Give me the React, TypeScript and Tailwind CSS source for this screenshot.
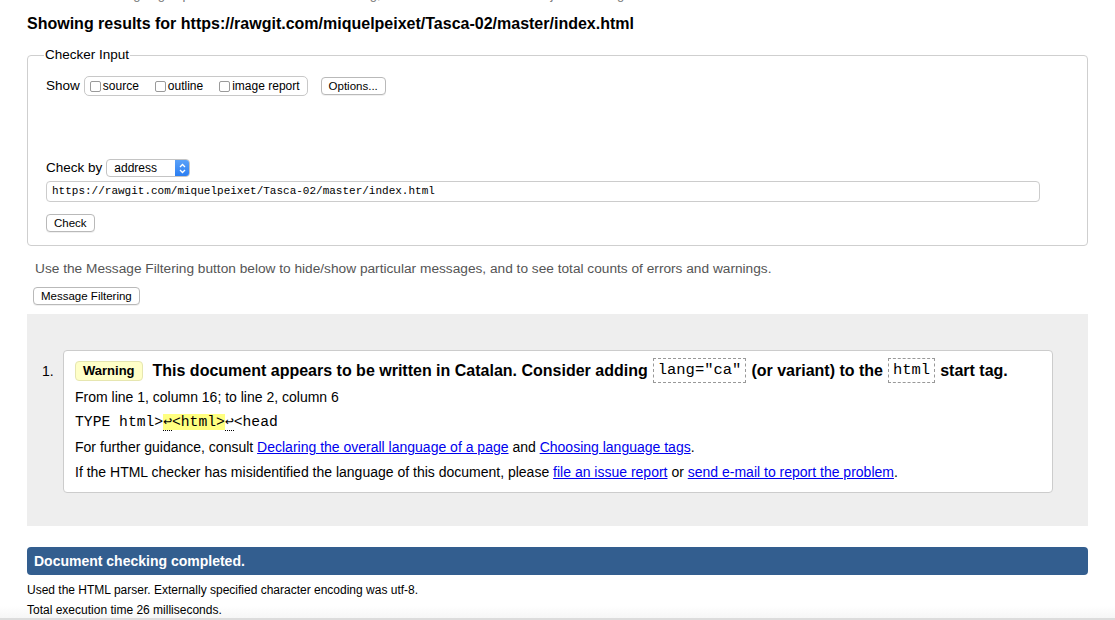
import React from "react";

function Checkbox({ label }: { label: string }) {
  return (
    <label className="flex items-center gap-[2px] text-[12px] leading-[14px]">
      <span className="inline-block w-[11px] h-[11px] rounded-[2px] border border-[#9a9a9a] bg-white" />
      <span>{label}</span>
    </label>
  );
}

function MacButton({ children, className = "" }: { children: React.ReactNode; className?: string }) {
  return (
    <button
      className={
        "h-[18px] px-[7px] rounded-[4px] border border-[#b9b9b9] bg-white text-[11.5px] leading-[16px] text-black shadow-[0_1px_0_rgba(0,0,0,0.06)] " +
        className
      }
    >
      {children}
    </button>
  );
}

function Ret() {
  return <span className="border-b border-dotted border-black">↩</span>;
}

export default function App() {
  return (
    <div className="relative w-full h-[620px] overflow-hidden bg-white text-black font-['Liberation_Sans',Arial,sans-serif]">
      {/* browser edge fade at the bottom */}
      <div className="absolute bottom-0 left-0 right-0 h-[14px] bg-gradient-to-b from-transparent to-[#f6f6f6] border-b-[2px] border-[#dcdcdc]" />

      <div className="relative px-[27px]">
        {/* line cut off at the top */}
        <div className="-mt-[13px] pl-[8px] text-[13px] leading-[16px] text-[#777] whitespace-nowrap">
          This tool is an ongoing experiment in better HTML checking, and its behavior remains subject to change
        </div>

        <h2 className="mt-[11px] text-[16px] leading-[20px] font-bold">
          Showing results for https://rawgit.com/miquelpeixet/Tasca-02/master/index.html
        </h2>

        {/* Checker Input */}
        <fieldset className="mt-[13px] border border-[#cfcfcf] rounded-[4px] pl-[18px] pr-[47px] pb-[13px]">
          <legend className="-ml-[2px] px-[1px] text-[13.5px] leading-[16px]">Checker Input</legend>

          <div className="mt-[13px] flex items-center h-[20px]">
            <span className="text-[13.5px] mr-[4px]">Show</span>
            <div className="flex items-center h-[20px] pl-[5px] pr-[7px] gap-[16px] rounded-[5px] border border-[#c8c8c8]">
              <Checkbox label="source" />
              <Checkbox label="outline" />
              <Checkbox label="image report" />
            </div>
            <MacButton className="ml-[13px]">Options...</MacButton>
          </div>

          <div className="mt-[63px] flex items-center h-[18px]">
            <span className="text-[13.5px] mr-[4px]">Check by</span>
            <div className="flex h-[18px] w-[84px] rounded-[4px] border border-[#c4c4c4] overflow-hidden">
              <span className="flex-1 pl-[7px] text-[12px] leading-[16px]">address</span>
              <span className="w-[14px] bg-gradient-to-b from-[#5aa1f8] to-[#2a7ef2] flex items-center justify-center">
                <svg width="7" height="11" viewBox="0 0 7 11" fill="none" stroke="white" strokeWidth="1.3">
                  <path d="M1 4 L3.5 1.5 L6 4" />
                  <path d="M1 7 L3.5 9.5 L6 7" />
                </svg>
              </span>
            </div>
          </div>

          <div className="mt-[4px] h-[21px] rounded-[4px] border border-[#cccccc] flex items-center pl-[5px] font-['Liberation_Mono',monospace] text-[11px]">
            https://rawgit.com/miquelpeixet/Tasca-02/master/index.html
          </div>

          <MacButton className="mt-[12px] block">Check</MacButton>
        </fieldset>

        <p className="mt-[15px] pl-[8px] text-[13.7px] leading-[16px] text-[#555]">
          Use the Message Filtering button below to hide/show particular messages, and to see total counts of errors and warnings.
        </p>

        <div className="mt-[6px] pl-[6px]">
          <MacButton className="shadow-[0_0_0_3px_#b3d3fa]">Message Filtering</MacButton>
        </div>

        {/* messages */}
        <div className="mt-[7px] bg-[#eeeeee] pt-[36px] pb-[33px] pl-[15px] pr-[35px] flex">
          <div className="w-[21px] pt-[9px] text-[14px] leading-[25px]">1.</div>
          <div className="flex-1 bg-white border border-[#cccccc] rounded-[4px] pl-[11px] pt-[7px] pb-[7px]">
            <div className="flex items-center h-[25px] text-[16px] font-bold whitespace-nowrap">
              <span className="mr-[10px] h-[20px] px-[7px] rounded-[4px] bg-[#ffffc8] border border-[#e6e6b0] text-[13px] leading-[18px] font-bold">
                Warning
              </span>
              <span>This document appears to be written in Catalan. Consider adding</span>
              <code className="mx-[5px] h-[25px] px-[4px] border border-dashed border-[#999] font-['Liberation_Mono',monospace] font-normal text-[15.5px] leading-[23px]">
                lang="ca"
              </code>
              <span>(or variant) to the</span>
              <code className="mx-[5px] h-[25px] px-[4px] border border-dashed border-[#999] font-['Liberation_Mono',monospace] font-normal text-[15.5px] leading-[23px]">
                html
              </code>
              <span>start tag.</span>
            </div>
            <div className="mt-[2px] text-[14px] leading-[25px]">From line 1, column 16; to line 2, column 6</div>
            <div className="text-[14.7px] leading-[25px] font-['Liberation_Mono',monospace] whitespace-nowrap">
              TYPE html&gt;
              <span className="bg-[#ffff80]">
                <Ret />&lt;html&gt;
              </span>
              <Ret />&lt;head
            </div>
            <div className="text-[14px] leading-[25px]">
              For further guidance, consult{" "}
              <a className="text-[#0000ee] underline" href="#">
                Declaring the overall language of a page
              </a>{" "}
              and{" "}
              <a className="text-[#0000ee] underline" href="#">
                Choosing language tags
              </a>
              .
            </div>
            <div className="text-[14px] leading-[25px]">
              If the HTML checker has misidentified the language of this document, please{" "}
              <a className="text-[#0000ee] underline" href="#">
                file an issue report
              </a>{" "}
              or{" "}
              <a className="text-[#0000ee] underline" href="#">
                send e-mail to report the problem
              </a>
              .
            </div>
          </div>
        </div>

        <div className="mt-[21px] h-[28px] rounded-[4px] bg-[#335e8f] pl-[7px] flex items-center text-white text-[14px] font-bold">
          Document checking completed.
        </div>
        <p className="mt-[5px] text-[12px] leading-[20px]">
          Used the HTML parser. Externally specified character encoding was utf-8.
        </p>
        <p className="text-[12px] leading-[20px]">Total execution time 26 milliseconds.</p>
      </div>
    </div>
  );
}
